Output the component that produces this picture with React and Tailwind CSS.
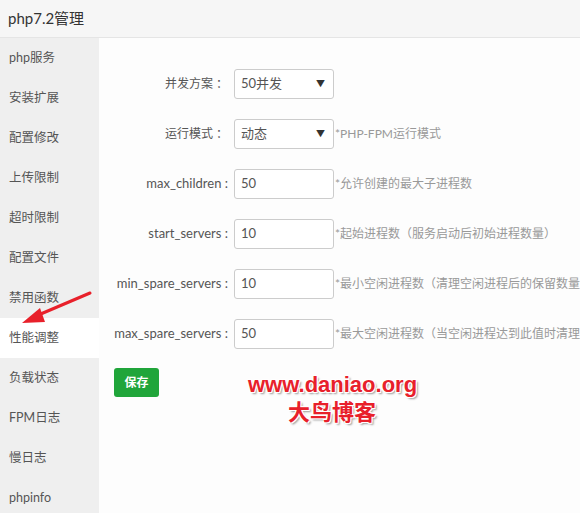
import React from "react";

const menu = ["php服务","安装扩展","配置修改","上传限制","超时限制","配置文件","禁用函数","性能调整","负载状态","FPM日志","慢日志","phpinfo"];

function Row({ label, value, select, note, cn }) {
  return (
    <div className="flex items-center h-[30px]">
      <div className={"w-[131px] shrink-0 pr-[2px] text-right text-[#555] whitespace-nowrap " + (cn ? "text-[12px]" : "text-[13px]")}>{label}</div>
      <div className="ml-[4px] w-[100px] h-[30px] shrink-0 border border-[#ccc] rounded-[3px] bg-white flex items-center pl-[6px] pr-[8px] text-[13px] text-[#555]">
        <span className="flex-1">{value}</span>
        {select && <span className="text-[9px] text-[#333]">▼</span>}
      </div>
      {note && <div className="ml-[1px] shrink-0 text-[12px] text-[#999] whitespace-nowrap">{note}</div>}
    </div>
  );
}

export default function App() {
  return (
    <div className="w-[580px] h-[513px] overflow-hidden relative bg-[#fdfdfd]" style={{ fontFamily: 'Lato, "Noto Sans CJK SC", sans-serif' }}>
      <div className="h-[38px] bg-[#f6f6f6] border-b border-[#e5e5e5] flex items-center pl-[8px] text-[15px] text-[#333]">php7.2管理</div>
      <div className="flex">
        <div className="w-[99px] shrink-0 bg-[#efefef] h-[475px]">
          {menu.map((m) => (
            <div key={m} className={"h-[40px] flex items-center pl-[9px] text-[12.5px] text-[#555] " + (m === "性能调整" ? "bg-white" : "")}>{m}</div>
          ))}
        </div>
        <div className="flex-1 min-w-0 pt-[31px] flex flex-col gap-[20px] overflow-hidden">
          <Row cn label="并发方案 ： " value="50并发" select />
          <Row cn label="运行模式 ： " value="动态" select note="*PHP-FPM运行模式" />
          <Row label="max_children :" value="50" note="*允许创建的最大子进程数" />
          <Row label="start_servers :" value="10" note="*起始进程数（服务启动后初始进程数量）" />
          <Row label="min_spare_servers :" value="10" note="*最小空闲进程数（清理空闲进程后的保留数量）" />
          <Row label="max_spare_servers :" value="50" note="*最大空闲进程数（当空闲进程达到此值时清理）" />
          <div className="-mt-[1px] pl-[15px]">
            <div className="w-[45px] h-[29px] rounded-[3px] bg-[#20a53a] text-white text-[12px] font-bold flex items-center justify-center">保存</div>
          </div>
        </div>
      </div>
      <svg className="absolute left-0 top-0 pointer-events-none" width="580" height="513">
        <line x1="90" y1="293" x2="36" y2="316" stroke="#e8202a" strokeWidth="3" strokeLinecap="round" />
        <polygon points="22,323 40,308 45,322" fill="#e8202a" />
      </svg>
      <div className="absolute left-[248px] top-[370px] w-[168px] text-center font-bold leading-[30px] text-[#e8202a]" style={{ fontFamily: '"Liberation Sans", "Noto Sans CJK SC", sans-serif', textShadow: "1px 1px 0 #fff, -1px -1px 0 #fff, 1px -1px 0 #fff, -1px 1px 0 #fff, 2px 2px 2px #999" }}>
        <div className="text-[22px]">www.daniao.org</div>
        <div className="text-[22px] -mt-[2px]">大鸟博客</div>
      </div>
    </div>
  );
}
